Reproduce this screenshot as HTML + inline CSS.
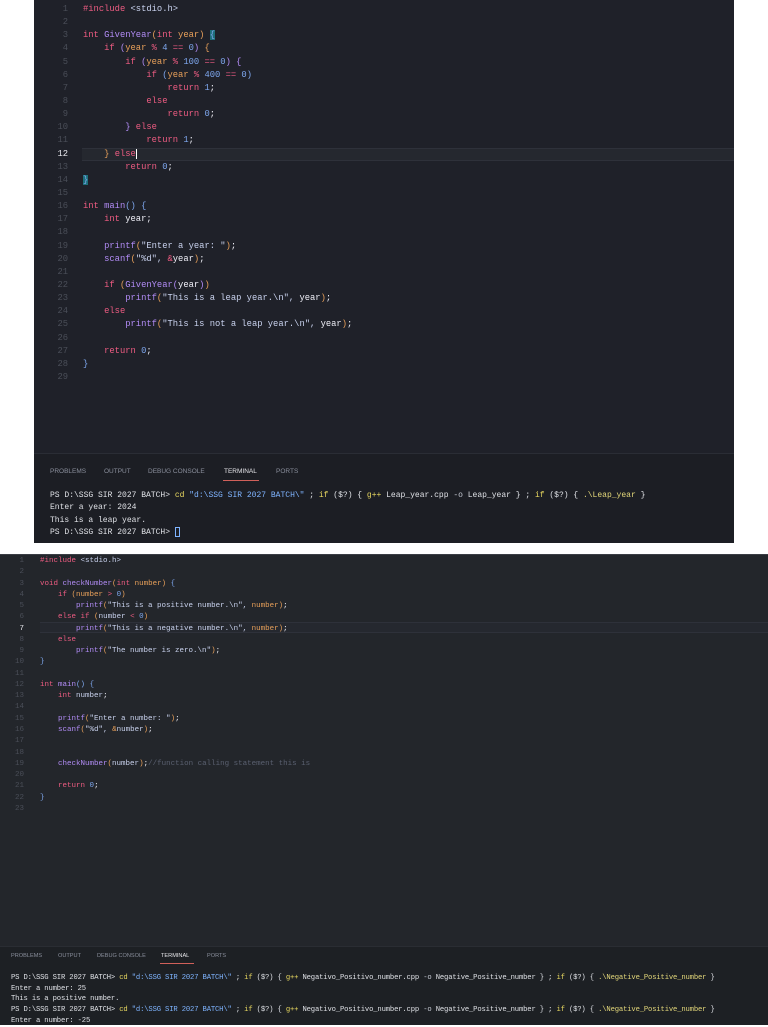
<!DOCTYPE html>
<html><head><meta charset="utf-8"><style>
*{margin:0;padding:0;box-sizing:border-box}
body{width:768px;height:1024px;background:#fff;position:relative;overflow:hidden;font-family:"Liberation Mono",monospace}
.p1{position:absolute;left:34px;top:0;width:700px;height:543px;background:#1f2129}
.p2{position:absolute;left:0;top:554px;width:768px;height:470px;background:#23262b;border-top:1px solid #3a3d44}
.code{position:absolute;white-space:pre;color:#c9d2ee}
.ln{position:absolute;text-align:right;color:#4a4e58;white-space:pre}
.p1 .code,.p1 .ln{font-size:8.8px;line-height:13.14px}
.p2 .code,.p2 .ln{font-size:7.5px;line-height:11.27px}
.k{color:#ee5c82}.f{color:#b28cf6}.n{color:#7ea7ee}.s{color:#c9d2ee}.o{color:#e8a05a}.v{color:#f0f0f8}.c{color:#5a6070}.y{color:#e8d6a0}.b{color:#7fb0ff}.g{color:#c8ccd6}
.term1{position:absolute;left:0;top:453px;width:700px;height:90px;background:#1c1e24;border-top:1px solid #2a2d35}
.term2{position:absolute;left:0;top:391px;width:768px;height:79px;background:#1d2024;border-top:1px solid #2a2d33}
.tabs{position:absolute;font-family:"Liberation Sans",sans-serif;color:#8a8f9c;white-space:nowrap}
.tabs span{position:absolute}
.tt{color:#e6e6ea}
.ul{position:absolute;height:1px;background:#d0605a}
.tl{position:absolute;white-space:pre;color:#dfe1e6}
.cy{color:#e8d860}.ts{color:#7fb4ff}.kw{color:#e4d87a}
.hl{position:absolute;background:#25282f;border-top:1px solid #2e313a;border-bottom:1px solid #2e313a}
</style></head><body>
<div class="p1">
<div class="hl" style="left:48px;top:148px;width:652px;height:13px"></div>
<div class="ln" style="left:14px;top:3px;width:20px">1
2
3
4
5
6
7
8
9
10
11
<span style="color:#e8e8ee">12</span>
13
14
15
16
17
18
19
20
21
22
23
24
25
26
27
28
29</div>
<div class="code" style="left:49px;top:3px"><span class="k">#include</span> <span class="s">&lt;stdio.h&gt;</span>

<span class="k">int</span> <span class="f">GivenYear</span><span class="o">(</span><span class="k">int</span> <span class="o">year</span><span class="o">)</span> <span class="n" style="background:#1d6f7a">{</span>
    <span class="k">if</span> <span class="f">(</span><span class="o">year</span> <span class="k">%</span> <span class="n">4</span> <span class="k">==</span> <span class="n">0</span><span class="f">)</span> <span class="o">{</span>
        <span class="k">if</span> <span class="f">(</span><span class="o">year</span> <span class="k">%</span> <span class="n">100</span> <span class="k">==</span> <span class="n">0</span><span class="f">)</span> <span class="f">{</span>
            <span class="k">if</span> <span class="n">(</span><span class="o">year</span> <span class="k">%</span> <span class="n">400</span> <span class="k">==</span> <span class="n">0</span><span class="n">)</span>
                <span class="k">return</span> <span class="n">1</span><span class="v">;</span>
            <span class="k">else</span>
                <span class="k">return</span> <span class="n">0</span><span class="v">;</span>
        <span class="f">}</span> <span class="k">else</span>
            <span class="k">return</span> <span class="n">1</span><span class="v">;</span>
    <span class="o">}</span> <span class="k">else</span><span style="border-left:1px solid #fff"></span>
        <span class="k">return</span> <span class="n">0</span><span class="v">;</span>
<span class="n" style="background:#1d6f7a">}</span>

<span class="k">int</span> <span class="f">main</span><span class="n">()</span> <span class="n">{</span>
    <span class="k">int</span> <span class="v">year</span><span class="v">;</span>

    <span class="f">printf</span><span class="o">(</span><span class="s">"Enter a year: "</span><span class="o">)</span><span class="v">;</span>
    <span class="f">scanf</span><span class="o">(</span><span class="s">"%d"</span>, <span class="k">&amp;</span><span class="v">year</span><span class="o">)</span><span class="v">;</span>

    <span class="k">if</span> <span class="o">(</span><span class="f">GivenYear</span><span class="f">(</span><span class="v">year</span><span class="f">)</span><span class="o">)</span>
        <span class="f">printf</span><span class="o">(</span><span class="s">"This is a leap year.\n"</span>, <span class="v">year</span><span class="o">)</span><span class="v">;</span>
    <span class="k">else</span>
        <span class="f">printf</span><span class="o">(</span><span class="s">"This is not a leap year.\n"</span>, <span class="v">year</span><span class="o">)</span><span class="v">;</span>

    <span class="k">return</span> <span class="n">0</span><span class="v">;</span>
<span class="n">}</span>
</div>
<div class="term1">
<div class="tabs" style="font-size:6.5px;top:14px;left:0">
<span style="left:16px">PROBLEMS</span><span style="left:70px">OUTPUT</span><span style="left:114px">DEBUG CONSOLE</span><span class="tt" style="left:190px">TERMINAL</span><span style="left:242px">PORTS</span></div>
<div class="ul" style="left:189px;top:26px;width:36px"></div>
<div class="tl" style="left:16px;top:36px;font-size:8px;line-height:12.3px">PS D:\SSG SIR 2027 BATCH&gt; <span class="cy">cd</span> <span class="ts">"d:\SSG SIR 2027 BATCH\"</span> ; <span class="cy">if</span> ($?) { <span class="cy">g++</span> Leap_year.cpp <span class="g">-o</span> Leap_year } ; <span class="cy">if</span> ($?) { <span class="kw">.\Leap_year</span> }
Enter a year: 2024
This is a leap year.
PS D:\SSG SIR 2027 BATCH&gt; <span style="display:inline-block;width:5px;height:10px;border:1px solid #7fb4ff;vertical-align:middle"></span></div>
</div>
</div>

<div class="p2">
<div class="hl" style="left:40px;top:67px;width:728px;height:11px"></div>
<div class="ln" style="left:2px;top:1px;width:22px">1
2
3
4
5
6
<span style="color:#e8e8ee">7</span>
8
9
10
11
12
13
14
15
16
17
18
19
20
21
22
23</div>
<div class="code" style="left:40px;top:1px"><span class="k">#include</span> <span class="s">&lt;stdio.h&gt;</span>

<span class="k">void</span> <span class="f">checkNumber</span><span class="o">(</span><span class="k">int</span> <span class="o">number</span><span class="o">)</span> <span class="n">{</span>
    <span class="k">if</span> <span class="o">(number</span> <span class="k">&gt;</span> <span class="n">0</span><span class="o">)</span>
        <span class="f">printf</span><span class="o">(</span><span class="s">"This is a positive number.\n"</span>, <span class="o">number</span><span class="o">)</span><span class="v">;</span>
    <span class="k">else if</span> <span class="o">(</span><span class="s">number</span> <span class="k">&lt;</span> <span class="n">0</span><span class="o">)</span>
        <span class="f">printf</span><span class="o">(</span><span class="s">"This is a negative number.\n"</span>, <span class="o">number</span><span class="o">)</span><span class="v">;</span>
    <span class="k">else</span>
        <span class="f">printf</span><span class="o">(</span><span class="s">"The number is zero.\n"</span><span class="o">)</span><span class="v">;</span>
<span class="n">}</span>

<span class="k">int</span> <span class="f">main</span><span class="n">()</span> <span class="n">{</span>
    <span class="k">int</span> <span class="s">number</span><span class="v">;</span>

    <span class="f">printf</span><span class="o">(</span><span class="s">"Enter a number: "</span><span class="o">)</span><span class="v">;</span>
    <span class="f">scanf</span><span class="o">(</span><span class="s">"%d"</span>, <span class="o">&amp;</span><span class="s">number</span><span class="o">)</span><span class="v">;</span>


    <span class="f">checkNumber</span><span class="o">(</span><span class="s">number</span><span class="o">)</span><span class="v">;</span><span class="c">//function calling statement this is</span>

    <span class="k">return</span> <span class="n">0</span><span class="v">;</span>
<span class="n">}</span>
</div>
<div class="term2">
<div class="tabs" style="font-size:5.6px;top:6px;left:0">
<span style="left:11px">PROBLEMS</span><span style="left:58px">OUTPUT</span><span style="left:97px">DEBUG CONSOLE</span><span class="tt" style="left:161px">TERMINAL</span><span style="left:207px">PORTS</span></div>
<div class="ul" style="left:160px;top:16px;width:34px"></div>
<div class="tl" style="left:11px;top:26px;font-size:7.2px;line-height:10.7px;letter-spacing:-0.15px">PS D:\SSG SIR 2027 BATCH&gt; <span class="cy">cd</span> <span class="ts">"d:\SSG SIR 2027 BATCH\"</span> ; <span class="cy">if</span> ($?) { <span class="cy">g++</span> Negativo_Positivo_number.cpp <span class="g">-o</span> Negative_Positive_number } ; <span class="cy">if</span> ($?) { <span class="kw">.\Negative_Positive_number</span> }
Enter a number: 25
This is a positive number.
PS D:\SSG SIR 2027 BATCH&gt; <span class="cy">cd</span> <span class="ts">"d:\SSG SIR 2027 BATCH\"</span> ; <span class="cy">if</span> ($?) { <span class="cy">g++</span> Negativo_Positivo_number.cpp <span class="g">-o</span> Negative_Positive_number } ; <span class="cy">if</span> ($?) { <span class="kw">.\Negative_Positive_number</span> }
Enter a number: -25</div>
</div>
</div>
</body></html>
